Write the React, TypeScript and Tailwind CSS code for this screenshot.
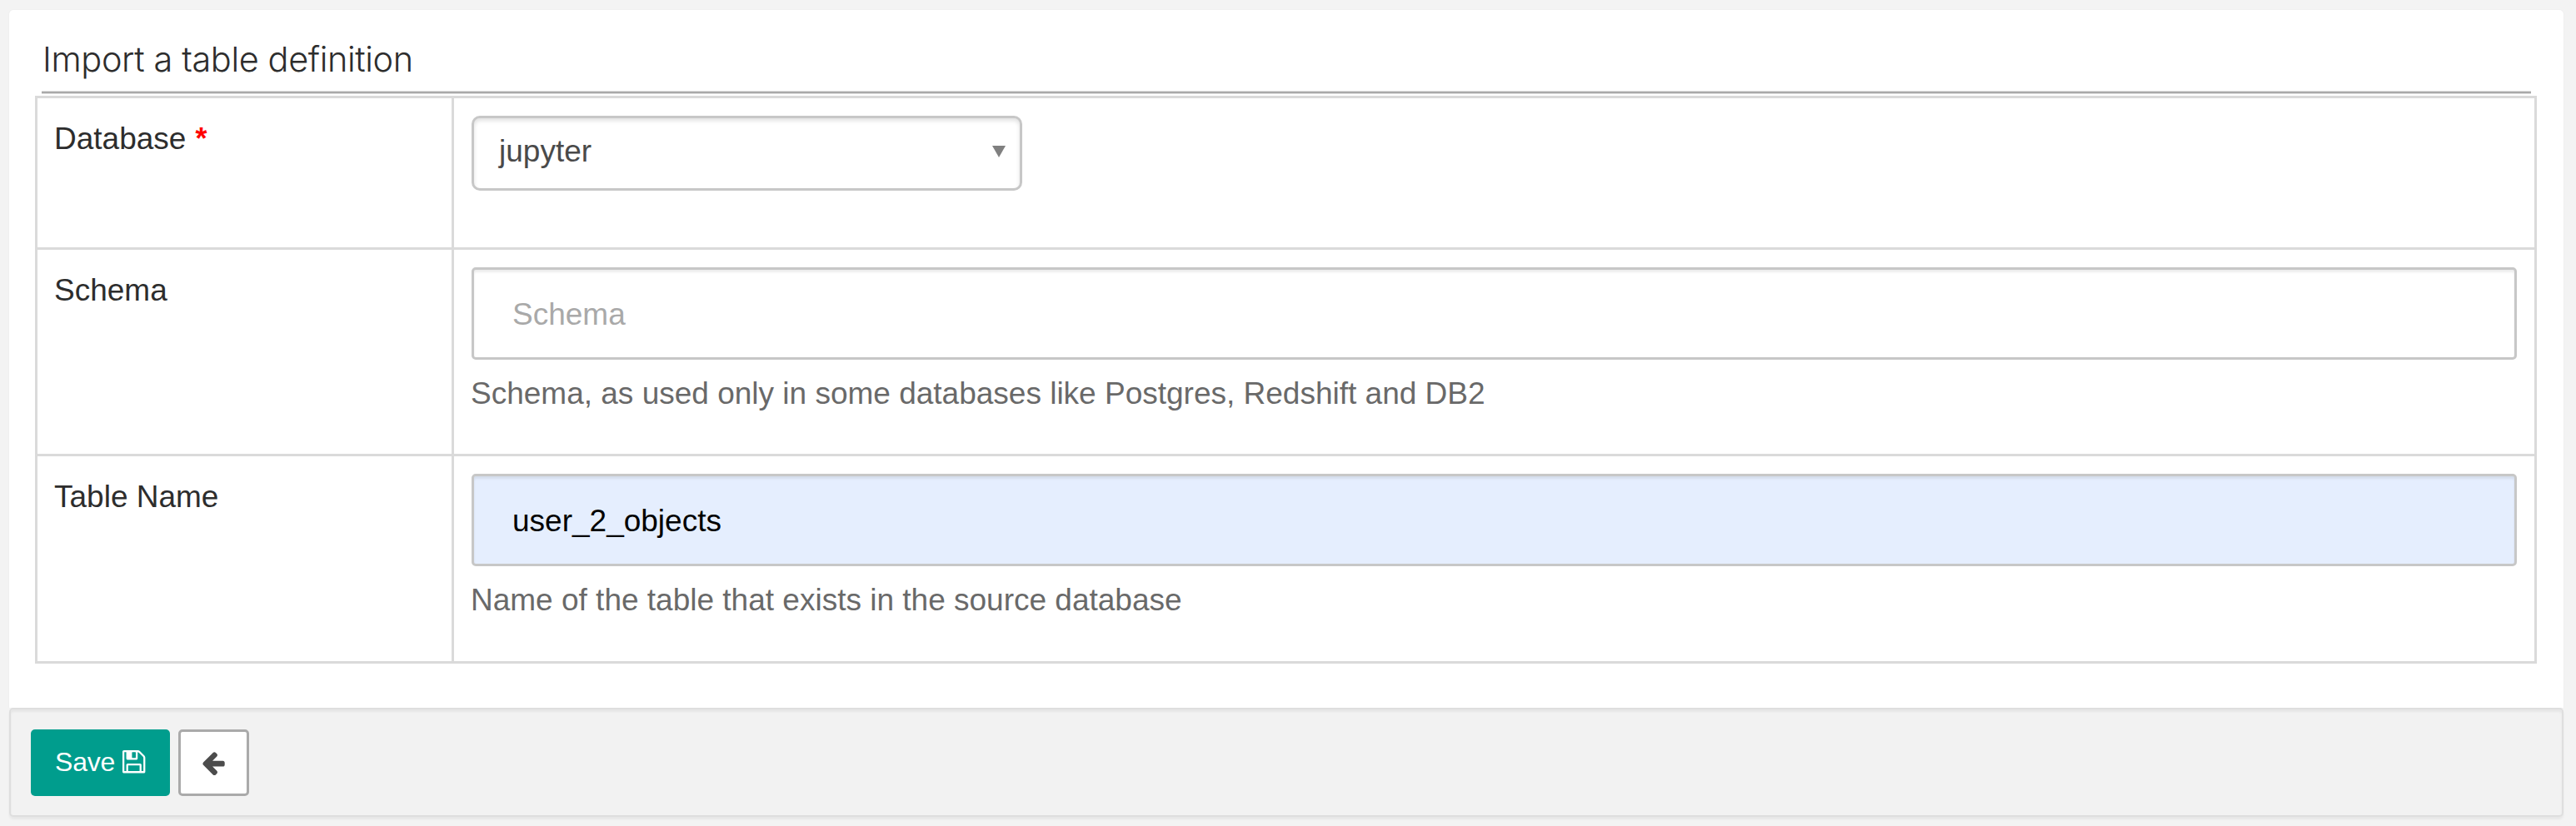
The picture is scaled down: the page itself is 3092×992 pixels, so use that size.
import React from "react";

const fieldBox =
  "block w-full h-[111px] rounded-[5px] border-[3px] border-[#c7c7c7] px-[46px] pt-[2px] text-[37px] outline-none shadow-[inset_0_3px_3px_rgba(0,0,0,0.075)]";

function Row({ label, required, height, children }: { label: string; required?: boolean; height: string; children: React.ReactNode }) {
  return (
    <div className={`flex ${height}`}>
      <label className="w-[500px] shrink-0 border-r-[3px] border-[#dadada] pl-5 pt-[22px] leading-[53px]">
        {label}
        {required && <strong className="ml-[11px] text-[36px] leading-none text-[#ff0000]">*</strong>}
      </label>
      <div className="grow px-[21px] pt-[21px]">{children}</div>
    </div>
  );
}

function FloppyIcon() {
  return (
    <svg viewBox="0 128 1536 1536" className="h-[27.4px] w-[27.4px]" fill="currentColor">
      <path d="M384 1536h768v-384h-768v384zm896 0h128v-896q0-14-10-38.5t-20-34.5l-281-281q-10-10-34-20t-39-10v416q0 40-28 68t-68 28h-576q-40 0-68-28t-28-68v-416h-128v1280h128v-416q0-40 28-68t68-28h832q40 0 68 28t28 68v416zm-384-928v-320q0-13-9.5-22.5t-22.5-9.5h-192q-13 0-22.5 9.5t-9.5 22.5v320q0 13 9.5 22.5t22.5 9.5h192q13 0 22.5-9.5t9.5-22.5zm640 32v928q0 40-28 68t-68 28h-1344q-40 0-68-28t-28-68v-1344q0-40 28-68t68-28h928q40 0 88 20t76 48l280 280q28 28 48 76t20 88z" />
    </svg>
  );
}

function ArrowLeftIcon() {
  return (
    <svg viewBox="0 0 1792 1792" className="h-8 w-8" fill="currentColor">
      <path d="M1664 896v128q0 53-32.5 90.5t-84.5 37.5h-704l293 294q38 36 38 90t-38 90l-75 76q-37 37-90 37-52 0-91-37l-651-652q-37-37-37-90 0-52 37-91l651-650q38-38 91-38 52 0 90 38l75 74q38 38 38 91t-38 91l-293 293h704q52 0 84.5 37.5t32.5 90.5z" />
    </svg>
  );
}

export default function App() {
  return (
    <div className="h-[992px] w-[3092px] bg-[#f3f3f3] pl-[11px] pr-[15px] pt-3 font-['Liberation_Sans',Arial,sans-serif] text-[37px] text-[#2d2d2d]">
      <div className="h-[838px] rounded-t-[5px] bg-white shadow-[0_0_2px_rgba(0,0,0,0.05)]">
        <div className="flex h-[97px] items-start pl-10 pt-[33px]">
          <h4 className="font-['Inter',sans-serif] text-[41.5px] font-light leading-[52px] tracking-[-0.4px] whitespace-nowrap">Import a table definition</h4>
        </div>
        <div className="mx-[39px] h-1 border-y border-[#dedede] bg-[#a9a9a9]" />
        <div className="ml-[31px] mt-[2px] w-[3003px] divide-y-[3px] divide-[#dadada] border-[3px] border-[#dadada]">
          <Row label="Database" required height="h-[182px]">
            <div className="flex h-[90px] w-[661px] items-center justify-between rounded-[10px] border-[3px] border-[#c7c7c7] pb-[4px] pl-[30px] pr-[17px] text-[#4a4a4a] shadow-[inset_0_3px_5px_rgba(0,0,0,0.12)]">
              <span>jupyter</span>
              <svg viewBox="0 0 16 14" className="h-[14px] w-4" fill="#808080">
                <path d="M0 0h16L8 14z" />
              </svg>
            </div>
          </Row>
          <Row label="Schema" height="h-[248px]">
            <input className={`${fieldBox} bg-white placeholder:text-[#a9a9a9]`} placeholder="Schema" />
            <div className="-ml-px mt-[14px] leading-[53px] text-[#696969]">Schema, as used only in some databases like Postgres, Redshift and DB2</div>
          </Row>
          <Row label="Table Name" height="h-[246px]">
            <input className={`${fieldBox} bg-[#e5eefe] text-black`} defaultValue="user_2_objects" />
            <div className="-ml-px mt-[14px] leading-[53px] text-[#696969]">Name of the table that exists in the source database</div>
          </Row>
        </div>
      </div>
      <div className="flex h-[131px] items-start gap-[10px] rounded-[5px] border-2 border-[#dedede] bg-[#f2f2f2] pl-6 pt-6 shadow-[inset_0_3px_3px_rgba(0,0,0,0.05),0_3px_3px_rgba(0,0,0,0.05)]">
        <button className="flex h-20 w-[167px] items-center gap-[9px] rounded-[5px] bg-[#009d8d] pb-[2px] pl-[29px] text-[32px] tracking-[-0.2px] text-white">
          Save
          <FloppyIcon />
        </button>
        <button className="flex h-20 w-[85px] items-center justify-center rounded-[5px] border-[3px] border-[#aaaaaa] bg-white pb-px pr-[2px] text-[#4c4c4c]">
          <ArrowLeftIcon />
        </button>
      </div>
    </div>
  );
}
